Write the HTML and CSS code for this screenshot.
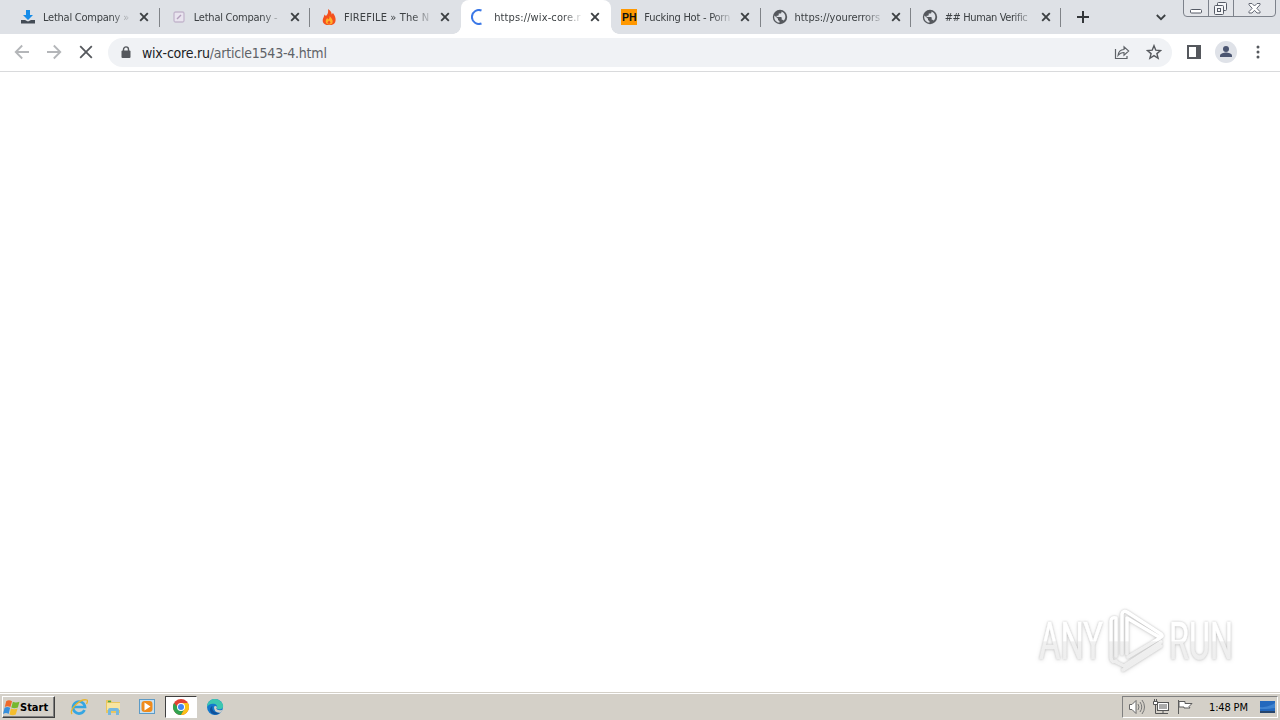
FILE: index.html
```
<!DOCTYPE html>
<html lang="en">
<head>
<meta charset="utf-8">
<title>wix-core.ru</title>
<link rel="stylesheet" href="styles.css">
</head>
<body>
<svg class="defs" aria-hidden="true">
  <symbol id="x" viewBox="0 0 10 10"><path d="M1.2 1.2 8.8 8.8M8.8 1.2 1.2 8.8" fill="none" stroke="#3c4043" stroke-width="1.9"/></symbol>
  <symbol id="globe" viewBox="0 0 16 16"><circle cx="8" cy="8" r="7.2" fill="#55585d"/><path d="M2.4 6.6 6 9.8v1.3l1.5 1.2v1.5C4.5 13.500 2.200 11 2.200 8ZM9.500 2.400v.8c0 .8-.7 1.400-1.400 1.400H6.700V6c0 .5-.4.8-.8.8H4.600V8h4.300c.5 0 .8.4.8.800v2h.7c.6 0 1.100.4 1.300 1a5.700 5.700 0 0 0-2.200-9.400Z" fill="#dee1e6"/></symbol>
</svg>
<header class="tabs">
  <div class="tab">
    <svg class="fav" viewBox="0 0 16 16"><path d="M6 1h4v5h3L8 11 3 6h3Z" fill="#168ce8"/><path d="M1 11h4l3 1.500 3-1.500h4v3.500H1Z" fill="#434b55"/></svg>
    <span class="title">Lethal Company »</span><svg class="close"><use href="#x"/></svg>
  </div>
  <div class="tab sep">
    <svg class="fav" viewBox="0 0 16 16"><rect x="3" y="3" width="10" height="10" rx="1.500" fill="#e9e4ef" stroke="#c3b6cd" stroke-width="1.300"/><path d="m6 10 4-4" stroke="#b49fbd" stroke-width="1.400"/></svg>
    <span class="title">Lethal Company -</span><svg class="close"><use href="#x"/></svg>
  </div>
  <div class="tab sep">
    <svg class="fav" viewBox="0 0 16 16"><path d="M7 0c3 2 4 4 3.500 5.500L12 4c2 3 3 5 2.500 8-.3 2-2 3.700-4 4h-5C3 15.500 1.600 13.500 1.700 11.500 1.700 9.500 3 8 3.500 5.500L5 7C7 5 7.500 3 7 0Z" fill="#f4511e"/><path d="M8.500 7c2 2 3.500 4 3.200 6-.2 1.500-1.300 2.500-3 2.500-2.500 0-4-1-4-3 0-1.500.8-2.500 1.500-3.500l1 1.500C8.500 9.500 8.800 8.500 8.500 7Z" fill="#ffb129"/><path d="M8 11.500c1 1 1.600 1.600 1.500 2.600-.1 1-3 1-3.100 0 0-1 1.100-1.600 1.600-2.600Z" fill="#f4511e"/></svg>
    <span class="title loose">FIREFILE » The N</span><svg class="close"><use href="#x"/></svg>
  </div>
  <div class="tab active">
    <svg class="fav" viewBox="0 0 16 16"><path d="M10.500 1.500A7 7 0 1 0 10.500 14.500" fill="none" stroke="#3b78e7" stroke-width="2"/></svg>
    <span class="title loose">https://wix-core.r</span><svg class="close"><use href="#x"/></svg>
  </div>
  <div class="tab">
    <span class="fav ph">PH</span>
    <span class="title">Fucking Hot - Porn</span><svg class="close"><use href="#x"/></svg>
  </div>
  <div class="tab sep">
    <svg class="fav"><use href="#globe"/></svg>
    <span class="title url-title">https://yourerrors</span><svg class="close"><use href="#x"/></svg>
  </div>
  <div class="tab sep">
    <svg class="fav"><use href="#globe"/></svg>
    <span class="title hash">## Human Verific</span><svg class="close"><use href="#x"/></svg>
  </div>
  <div class="newtab"><svg width="12" height="12"><path d="M6 0v12M0 6h12" stroke="#33363a" stroke-width="2"/></svg></div>
  <svg class="chevron" width="10" height="7"><path d="m.8 1 4.200 4.200L9.200 1" fill="none" stroke="#3c4043" stroke-width="1.800"/></svg>
  <svg class="wincontrols" width="94" height="18"><path d="M.5 0v13q0 3.500 3.500 3.500h85q3.500 0 3.500-3.500V0M25.500 0v16M50.500 0v16" fill="#e3e5e9" stroke="#7d828b"/><rect x="7.500" y="9.500" width="11" height="3.500" rx="1" fill="#fff" stroke="#565b66"/><g fill="#f5f6f8" stroke="#565b66"><rect x="34.500" y="2.500" width="9" height="8" rx="1"/><rect x="31.500" y="5.500" width="9" height="9" rx="1"/><rect x="34.500" y="8.500" width="3" height="3"/></g><path d="M66 3.500h3l2.500 2.500L74 3.500h3v1.300L73.800 8.300l3.200 3.300v1.400h-3l-2.500-2.700L69 13h-3v-1.400l3.200-3.300L66 4.800Z" fill="#fff" stroke="#646975"/></svg>
</header>
<nav class="toolbar">
  <svg class="nav" viewBox="0 0 16 16"><path d="M15 8H2M8.200 1.500 1.700 8l6.500 6.500" fill="none" stroke="#b4b6b9" stroke-width="1.800"/></svg>
  <svg class="nav" viewBox="0 0 16 16"><path d="M1 8h13M7.800 1.500 14.300 8l-6.500 6.500" fill="none" stroke="#b4b6b9" stroke-width="1.800"/></svg>
  <svg class="nav" viewBox="0 0 16 16"><path d="m2.200 2.200 11.600 11.600M13.800 2.200 2.200 13.800" fill="none" stroke="#55585d" stroke-width="1.800"/></svg>
  <div class="omnibox">
    <svg width="10" height="13" viewBox="0 0 10 13"><path d="M2.500 6V3.400a2.500 2.500 0 0 1 5 0V6" fill="none" stroke="#55585d" stroke-width="1.400"/><rect x=".5" y="4.500" width="9" height="7.500" rx="1" fill="#55585d"/></svg>
    <span class="url">wix-core.ru<span>/article1543-4.html</span></span>
    <svg width="16" height="15" viewBox="0 0 16 15"><path d="M1.500 4v9.500h11.500V11" fill="none" stroke="#5f6368" stroke-width="1.200"/><path d="M4 10.500c.4-3.700 2.500-5.700 6-6V1.800L14.700 6 10 10.200V7.500c-2.800 0-4.500 1-6 3Z" fill="none" stroke="#5f6368" stroke-width="1.100"/></svg>
    <svg width="16" height="16" viewBox="0 0 16 16"><path d="m8 1.700 1.800 4.500 4.800.3-3.700 3.100 1.200 4.700L8 11.700l-4.100 2.600 1.200-4.700L1.400 6.500l4.800-.3Z" fill="none" stroke="#55585d" stroke-width="1.400"/></svg>
  </div>
  <svg class="panel" width="14" height="14"><rect x="1" y="1" width="12" height="12" fill="#fff" stroke="#55585d" stroke-width="2"/><path d="M9 1h4v12H9Z" fill="#55585d"/></svg>
  <svg class="avatar" width="22" height="22"><circle cx="11" cy="11" r="11" fill="#dfe2e8"/><circle cx="11" cy="8" r="3" fill="#4b5571"/><path d="M5 16v-1.500c0-2 4-3 6-3s6 1 6 3V16Z" fill="#4b5571"/></svg>
  <svg class="dots" width="4" height="14"><g fill="#55585d"><circle cx="2" cy="2" r="1.500"/><circle cx="2" cy="7" r="1.500"/><circle cx="2" cy="12" r="1.500"/></g></svg>
</nav>
<main class="page">
  <svg class="watermark" width="210" height="72" viewBox="0 0 210 72">
    <defs><linearGradient id="shade" gradientUnits="userSpaceOnUse" x1="0" y1="0" x2="0" y2="72"><stop offset=".48" stop-color="#fff"/><stop offset=".5" stop-color="#f0f0f0"/><stop offset="1" stop-color="#ececec"/></linearGradient></defs>
    <g class="mark">
      <text x="7" y="53" textLength="64" lengthAdjust="spacingAndGlyphs">ANY</text>
      <text x="137" y="53" textLength="64" lengthAdjust="spacingAndGlyphs">RUN</text>
      <path d="M84 50V12q-5-1-5 3v37q1 5 5 3"/>
      <path d="M90 48V8q1-4 5-2l34 22q3 3-2 3L95 12v36"/>
      <path d="M96 51l32-19M84 56l8 4 37-24M91 64l38-24"/>
    </g>
  </svg>
</main>
<footer class="taskbar">
  <div class="start"><svg width="17" height="17" viewBox="0 0 16 16"><path d="M3 2q2.500-1.700 5.500 0L7 7.500Q4 6 1.700 7.500Z" fill="#ee692b"/><path d="M9.300 2.500q2.500 1.500 6.200 0L14 8Q10.500 9.500 7.800 8Z" fill="#75b82f"/><path d="M1.500 8.300q2.500-1.500 5.200 0L5.300 14Q3 12.300 0 14Z" fill="#378fdc"/><path d="M7.500 8.900q2.800 1.500 6.200.1L12 14.500q-3 1.500-5.900 0Z" fill="#f4bd2d"/></svg>Start</div>
  <div class="launch">
    <svg viewBox="0 0 18 18"><path d="M14.500 12A6 6 0 1 1 15 9H4" fill="none" stroke="#35a6e2" stroke-width="2.700"/><path d="M2 16C-1 12 10 0 17 2q1 1-.5 4" fill="none" stroke="#e8b52d" stroke-width="1.300"/></svg>
    <svg viewBox="0 0 18 18"><path d="M2 2h5l1 2h8v11H2Z" fill="#e9c65f"/><path d="M3 5h13v7H3Z" fill="#f8e5a0"/><path d="M4 17v-5q0-2 2-2h7q2 0 2 2v5h-3v-4H7v4Z" fill="#75b8df"/><path d="M4 3.500h3" stroke="#4aa84a" stroke-width="1.500"/></svg>
    <svg viewBox="0 0 18 18"><rect x="1.500" y="1.500" width="15" height="14" fill="#c6e1f3" stroke="#5d9bc6"/><rect x="3.500" y="3" width="11" height="11" rx="3" fill="#ef8b1c"/><path d="M6.500 4.500 12.500 8.500l-6 4Z" fill="#fff"/></svg>
    <div class="pressed"><svg viewBox="0 0 18 18"><circle cx="9" cy="9" r="8" fill="#e34133"/><path d="M2.070 5A8 8 0 0 0 9 17l3.500-6L9 9H5.500Z" fill="#31a350"/><path d="M15.930 5A8 8 0 0 1 9 17l3.500-6L9 5Z" fill="#fbc116"/><circle cx="9" cy="9" r="4" fill="#fff"/><circle cx="9" cy="9" r="3" fill="#4285f4"/></svg></div>
    <svg viewBox="0 0 18 18"><circle cx="9" cy="9" r="8" fill="#1479cc"/><path d="M1.200 7C3 1 9-.5 13.500 2.400 17 4.700 18 8 16.500 10c-1.300 1.800-4.500 1.500-6 .6 1.500-1.500.5-4.600-3-4.800C4 5.600 2 7 1.200 9Z" fill="#3cc6b0"/><path d="M6.500 8c-1.300 4 2 7 7.500 6.800C10 18.500 4 16 4 11.500 4 10 5 8.500 6.500 8Z" fill="#10519b"/><path d="M8 9q1-2 3 0-1.500 1.500 0 2.500 2.500 1.500 5.600.2l-1.600 2.800Q8 15.500 8 9Z" fill="#d4d0c8"/></svg>
  </div>
  <div class="tray">
    <svg width="18" height="16" viewBox="0 0 18 16"><path d="M1.500 5.500H4l4-4v13l-4-4H1.500Z" fill="#fff" stroke="#686868"/><path d="M10 5q2 3 0 6M12 3q3.500 5 0 10M14 1q5 7 0 14" fill="none" stroke="#777"/></svg>
    <svg width="18" height="16" viewBox="0 0 18 16"><rect x="5.500" y="3.500" width="11" height="8" fill="#aaa" stroke="#555"/><path d="M6.500 4.500h9v6h-9Z" fill="none" stroke="#fff"/><path d="M7 14.500h9M11 12v2M3.500 6v8.500H7" fill="none" stroke="#555"/><path d="M1.500 2.500h4v3h-4ZM2.500 2V0M4.500 2V0" fill="#fff" stroke="#555"/></svg>
    <svg width="18" height="16" viewBox="0 0 18 16"><path d="M2.500 1v14M3 2.500h6v2h7l-3 3 1 1.500H8V8H3Z" fill="#fff" stroke="#5c5c5c"/></svg>
    <span class="clock">1:48 PM</span>
    <svg width="15" height="14" viewBox="0 0 15 14"><path d="M0 1h15v10H0Z" fill="#2368bd"/><path d="M0 7Q7 8 15 3v5Q8 9 0 9Z" fill="#3f83d0"/><path d="M0 11h15v2H0Z" fill="#27456c"/></svg>
  </div>
</footer>
</body>
</html>
```
FILE: styles.css
```
* { box-sizing: border-box; }
body { margin: 0; width: 1280px; height: 720px; overflow: hidden; display: flex; flex-direction: column; background: #fff; font-family: "DejaVu Sans Condensed", "DejaVu Sans", sans-serif; font-stretch: condensed; }
svg { display: block; flex: none; }
.defs { position: absolute; width: 0; height: 0; }
.tabs { height: 34px; background: #dee1e6; display: flex; padding-left: 10px; position: relative; flex: none; }
.tab { width: 150.200px; height: 34px; display: flex; align-items: center; padding-left: 10px; position: relative; flex: none; }
.tab + .tab { padding-left: 10.600px; }
.sep::before { content: ""; position: absolute; left: -1px; top: 8px; width: 1px; height: 19px; background: #808388; }
.tab:nth-child(7)::after { content: ""; position: absolute; right: 0; top: 8px; width: 1px; height: 19px; background: #808388; }
.active { background: #fff; border-radius: 8px 8px 0 0; }
.active::before, .active::after { content: ""; position: absolute; bottom: 0; width: 8px; height: 8px; }
.active::before { left: -8px; background: radial-gradient(circle at 0 0, transparent 7.500px, #fff 8px); }
.active::after { right: -8px; background: radial-gradient(circle at 100% 0, transparent 7.500px, #fff 8px); }
.fav { width: 16px; height: 16px; }
.ph { background: #ff9800; color: #111; font: bold 10.500px/16px "Liberation Sans", sans-serif; text-align: center; flex: none; }
.title { width: 90px; margin-left: 7px; padding-top: 1px; font-size: 11px; line-height: 16px; letter-spacing: -0.240px; color: #3c4043; white-space: nowrap; mask-image: linear-gradient(90deg, #000 68px, transparent 90px); }
.loose { letter-spacing: 0.120px; }
.url-title { letter-spacing: -0.050px; }
.hash { letter-spacing: -0.400px; }
.close { width: 10px; height: 10px; margin-left: 6px; }
.newtab { margin: 11px 0 0 16px; }
.chevron { position: absolute; left: 1156px; top: 14px; }
.wincontrols { position: absolute; left: 1183px; top: 0; }
.toolbar { height: 38px; flex: none; display: flex; align-items: center; padding: 0 0 1px 14px; border-bottom: 1px solid #d9dadc; }
.nav { width: 16px; height: 16px; margin-right: 16px; }
.omnibox { width: 1064px; height: 29px; margin-left: -2px; border-radius: 15px; background: #f0f2f5; display: flex; align-items: center; padding: 0 10px 0 13px; gap: 16px; }
.url { flex: 1; margin-left: -5px; padding-top: 1px; font-size: 14px; letter-spacing: -0.220px; color: #202124; }
.url span { color: #5f6368; }
.panel { margin-left: 15px; }
.avatar { margin-left: 14px; }
.dots { margin-left: 19px; }
.page { flex: 1; display: flex; justify-content: flex-end; align-items: flex-end; padding: 0 38px 14px 0; }
.mark { font: 400 52px Roboto, sans-serif; fill: url(#shade); filter: drop-shadow(0 0 1px rgba(0, 0, 0, .2)) drop-shadow(0 1px 2px rgba(0, 0, 0, .11)); }
.mark text { stroke: url(#shade); stroke-width: .6; }
.mark path { fill: none; stroke: url(#shade); stroke-width: 3.500; stroke-linejoin: round; stroke-linecap: round; }
.taskbar { height: 28px; flex: none; background: #d4d0c8; border-top: 1px solid #d4d0c8; box-shadow: inset 0 1px #fff; display: flex; align-items: center; padding: 2px 2px 1px; font-family: "DejaVu Sans Condensed", sans-serif; }
.start { width: 53px; height: 22px; border: 1px solid #fff; border-right-color: #404040; border-bottom-color: #404040; box-shadow: inset -1px -1px #808080; display: flex; align-items: center; padding-left: 0; font-size: 11px; font-weight: bold; }
.launch { display: flex; align-items: center; padding-left: 15px; gap: 16px; }
.launch svg { width: 18px; height: 18px; }
.pressed { width: 32px; height: 22px; margin: 0 -7px; background: #fff; border: 1px solid #404040; border-right-color: #fff; border-bottom-color: #fff; display: flex; align-items: center; justify-content: center; }
.tray { margin-left: auto; width: 156px; height: 22px; border: 1px solid #808080; border-right-color: #fff; border-bottom-color: #fff; display: flex; align-items: center; padding-left: 5px; gap: 6px; }
.clock { width: 42px; margin-left: 9px; margin-right: 3px; font-size: 11px; letter-spacing: -0.150px; white-space: nowrap; }
```
